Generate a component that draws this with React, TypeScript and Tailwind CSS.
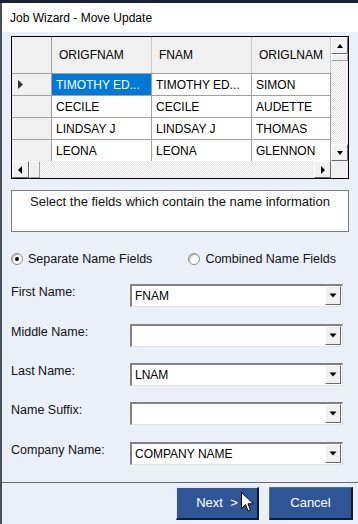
const font = { fontFamily: '"Liberation Sans", Arial, sans-serif' };

const headers = ["ORIGFNAM", "FNAM", "ORIGLNAM"];
const rows = [
  ["TIMOTHY ED...", "TIMOTHY ED...", "SIMON"],
  ["CECILE", "CECILE", "AUDETTE"],
  ["LINDSAY J", "LINDSAY J", "THOMAS"],
  ["LEONA", "LEONA", "GLENNON"],
];
const colWidths = ["w-[100px]", "w-[100px]", "w-[79px]"];

function ScrollButton({ dir }: { dir: "up" | "down" | "left" | "right" }) {
  const tri =
    dir === "up"
      ? "M1 5 L4 1 L7 5 Z"
      : dir === "down"
        ? "M1 1 L4 5 L7 1 Z"
        : dir === "left"
          ? "M5 0 L1 4 L5 8 Z"
          : "M2 0 L6 4 L2 8 Z";
  const box = dir === "up" || dir === "down" ? "0 0 8 6" : "0 0 7 8";
  return (
    <div className="flex h-[17px] w-[17px] shrink-0 items-center justify-center border-t border-l border-t-white border-l-white border-r border-b border-r-[#696969] border-b-[#696969] bg-[#f0f0f0]">
      <svg width={dir === "up" || dir === "down" ? 8 : 7} height={dir === "up" || dir === "down" ? 6 : 8} viewBox={box}>
        <path d={tri} fill="#000" />
      </svg>
    </div>
  );
}

function Combo({ value }: { value: string }) {
  return (
    <div className="flex h-[23px] w-[213px] border-t-2 border-l-2 border-t-[#828282] border-l-[#828282] border-b border-r border-b-[#e3e3e3] border-r-[#e3e3e3] bg-white">
      <div className="flex flex-1 items-center pl-[3px] text-[12px] text-black">{value}</div>
      <div className="mr-[1px] mb-[1px] flex w-[16px] items-center justify-center border-t border-l border-t-white border-l-white border-r border-b border-r-[#696969] border-b-[#696969] bg-[#f0f0f0]">
        <svg width="8" height="5" viewBox="0 0 8 5">
          <path d="M0.5 0.5 L7.5 0.5 L4 4.5 Z" fill="#000" />
        </svg>
      </div>
    </div>
  );
}

function Radio({ checked, label }: { checked: boolean; label: string }) {
  return (
    <div className="flex items-center">
      <div className="flex h-[12px] w-[12px] items-center justify-center rounded-full border border-[#8a8a8a] bg-white shadow-[inset_1px_1px_1px_#b0b0b0]">
        {checked && <div className="h-[4px] w-[4px] rounded-full bg-black" />}
      </div>
      <span className="ml-[5px] text-[12.5px] text-[#111]">{label}</span>
    </div>
  );
}

const fields = [
  { label: "First Name:", value: "FNAM", mt: "mt-[17px]" },
  { label: "Middle Name:", value: "", mt: "mt-[17px]" },
  { label: "Last Name:", value: "LNAM", mt: "mt-[16px]" },
  { label: "Name Suffix:", value: "", mt: "mt-[16px]" },
  { label: "Company Name:", value: "COMPANY NAME", mt: "mt-[17px]" },
];

export default function App() {
  return (
    <div className="flex h-[524px] w-[358px] flex-col overflow-hidden bg-[#1c2535]" style={font}>
      <div className="h-[3px] shrink-0 bg-[#1a2333]" />
      <div className="flex flex-1">
        <div className="w-[2px] shrink-0 bg-[#44505a]" />
        <div className="flex flex-1 flex-col">
          <div className="flex h-[29px] shrink-0 items-center bg-white pl-[8px] pt-[1px] text-[12px] text-black">
            Job Wizard - Move Update
          </div>
          <div className="flex flex-1 flex-col bg-[#eaeff8]">
            <div className="flex flex-col pl-[9px] pt-[4px]">
              {/* data grid */}
              <div className="flex h-[143px] w-[338px] overflow-hidden border border-black bg-[#f0f0f0] text-[12px]">
                <div className="flex w-[319px] flex-col">
                  <div className="flex h-[36px] shrink-0 bg-[#f0f0f0]">
                    <div className="w-[40px] shrink-0 border-r border-[#a0a0a0]" />
                    {headers.map((h, i) => (
                      <div
                        key={h}
                        className={`${colWidths[i]} flex shrink-0 items-center border-r border-[#c8c8c8] pl-[7px] text-black`}
                      >
                        {h}
                      </div>
                    ))}
                  </div>
                  {rows.map((r, ri) => (
                    <div key={ri} className="flex h-[22px] shrink-0 border-t border-[#a0a0a0]">
                      <div className="flex w-[40px] shrink-0 items-center border-r border-[#a0a0a0] bg-[#f0f0f0] pl-[6px]">
                        {ri === 0 && (
                          <svg width="5" height="9" viewBox="0 0 5 9">
                            <path d="M0 0 L5 4.5 L0 9 Z" fill="#333" />
                          </svg>
                        )}
                      </div>
                      {r.map((c, ci) => (
                        <div
                          key={ci}
                          className={`${colWidths[ci]} flex shrink-0 items-center whitespace-nowrap border-r border-[#a0a0a0] pl-[4px] ${
                            ri === 0 && ci === 0 ? "bg-[#0078d7] text-white" : "bg-white text-black"
                          }`}
                        >
                          {c}
                        </div>
                      ))}
                    </div>
                  ))}
                  <div className="mt-auto flex h-[17px] shrink-0">
                    <ScrollButton dir="left" />
                    <div className="h-[17px] w-[11px] shrink-0 border-t border-l border-t-white border-l-white border-r border-b border-r-[#a0a0a0] border-b-[#a0a0a0] bg-[#f0f0f0]" />
                    <div className="flex-1 bg-[repeating-conic-gradient(#ffffff_0%_25%,#e4e4e4_0%_50%)] bg-size-[2px_2px]" />
                    <ScrollButton dir="right" />
                  </div>
                </div>
                <div className="flex w-[17px] flex-col">
                  <ScrollButton dir="up" />
                  <div className="h-[7px] w-[17px] shrink-0 border-t border-l border-t-white border-l-white border-r border-b border-r-[#a0a0a0] border-b-[#a0a0a0] bg-[#f0f0f0]" />
                  <div className="flex-1 bg-[repeating-conic-gradient(#ffffff_0%_25%,#e4e4e4_0%_50%)] bg-size-[2px_2px]" />
                  <ScrollButton dir="down" />
                  <div className="h-[17px] shrink-0 bg-[#f0f0f0]" />
                </div>
              </div>

              {/* instruction box */}
              <div className="mt-[11px] h-[42px] w-[338px] border border-[#7d7d7d] bg-white pt-[3px] text-center text-[13px] leading-[16px] text-[#111]">
                Select the fields which contain the name information
              </div>

              {/* radios */}
              <div className="mt-[19px] flex h-[16px] items-center">
                <Radio checked label="Separate Name Fields" />
                <div className="ml-[36px]">
                  <Radio checked={false} label="Combined Name Fields" />
                </div>
              </div>

              {fields.map((f) => (
                <div key={f.label} className={`${f.mt} flex items-start`}>
                  <div className="w-[119px] shrink-0 pt-[1px] text-[12.5px] leading-[15px] text-[#111]">{f.label}</div>
                  <Combo value={f.value} />
                </div>
              ))}
            </div>

            <div className="mt-[17px] h-[1px] shrink-0 bg-[#6b6b6b]" />

            <div className="flex justify-end gap-[10px] pr-[5px] pt-[4px]">
              <div className="relative">
                <div className="flex h-[33px] w-[83px] items-center justify-center whitespace-pre border-t border-l border-t-[#dfe7f5] border-l-[#dfe7f5] border-r-2 border-b-2 border-r-[#0e1c38] border-b-[#0e1c38] bg-[#2f5597] text-[13px] text-white">
                  {"Next  >"}
                </div>
                <svg className="absolute left-[65px] top-[5px]" width="13" height="21" viewBox="0 0 13 21">
                  <path
                    d="M0.5 0.5 L0.5 16.5 L4.5 12.5 L7 19 L9.5 18 L7 11.8 L12.5 11.8 Z"
                    fill="#fff"
                    stroke="#000"
                    strokeWidth="1"
                    strokeLinejoin="miter"
                  />
                </svg>
              </div>
              <div className="flex h-[33px] w-[84px] items-center justify-center border-t border-l border-t-[#4a6fae] border-l-[#4a6fae] border-r-2 border-b-2 border-r-[#0e1c38] border-b-[#0e1c38] bg-[#2f5597] text-[13px] text-white">
                Cancel
              </div>
            </div>
          </div>
        </div>
      </div>
    </div>
  );
}
